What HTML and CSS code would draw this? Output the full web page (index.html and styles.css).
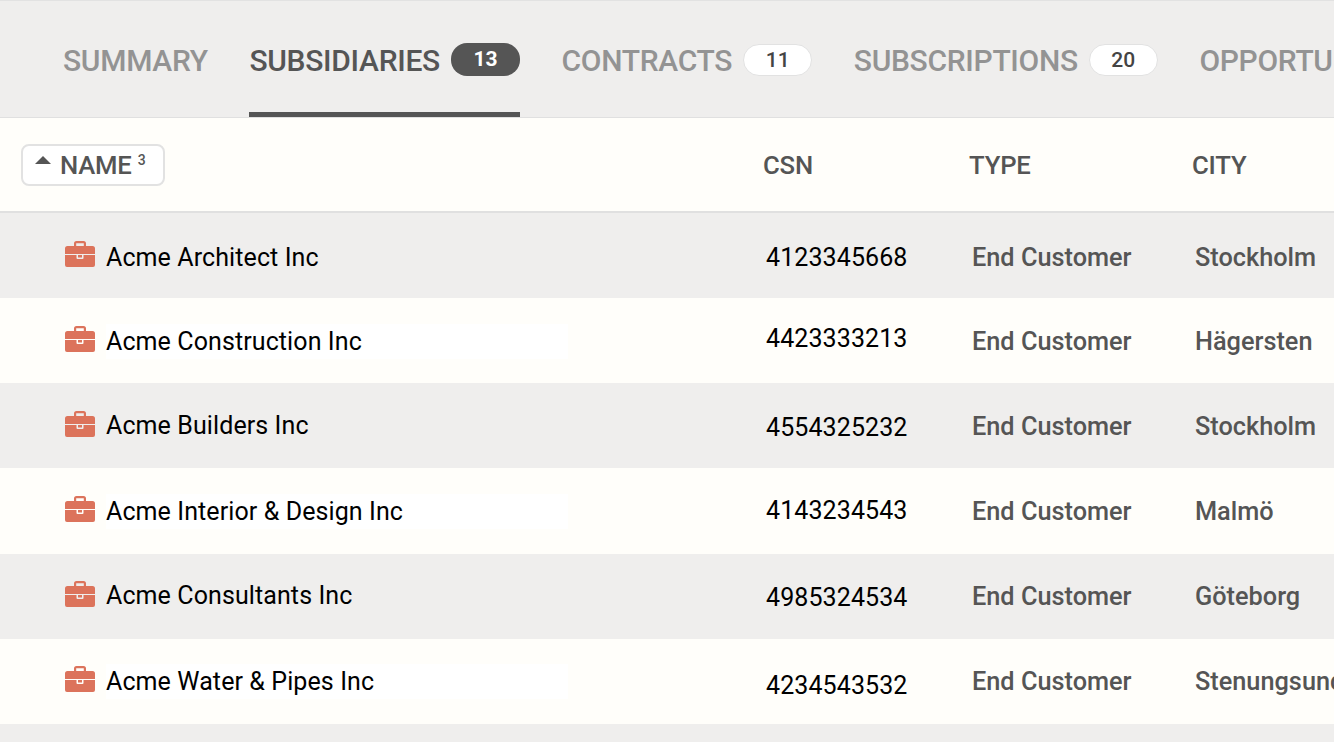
FILE: index.html
```html
<html>
  <head>
    <meta charset="utf-8">
    <title>Subsidiaries</title>
    <link rel="stylesheet" href="styles.css">
  </head>
  <body>
    <svg class="sprite" width="0" height="0">
      <symbol id="briefcase" viewBox="0 0 30 26">
        <path d="M9 5V2.500A2.500 2.500 0 0 1 11.500 0h7A2.500 2.500 0 0 1 21 2.500V5h-2.200V2.200h-7.600V5z"/>
        <path d="M2.500 5h25A2.500 2.500 0 0 1 30 7.500V13H0V7.500A2.500 2.500 0 0 1 2.500 5z"/>
        <path d="M0 14h11.500V17a1 1 0 0 0 1 1h5a1 1 0 0 0 1-1v-3H30V24a2 2 0 0 1-2 2H2a2 2 0 0 1-2-2z"/>
        <path d="M13 14h4v2.500h-4z"/>
      </symbol>
    </svg>

    <nav class="tabs">
      <a class="tab">SUMMARY</a>
      <a class="tab active">SUBSIDIARIES <span class="count">13</span></a>
      <a class="tab">CONTRACTS <span class="count">11</span></a>
      <a class="tab">SUBSCRIPTIONS <span class="count">20</span></a>
      <a class="tab">OPPORTUNITIES</a>
    </nav>

    <div class="head">
      <div class="name-col"><span class="sort"><i class="arrow"></i>NAME <sup>3</sup></span></div>
      <div class="csn-col">CSN</div>
      <div class="type-col">TYPE</div>
      <div class="city-col">CITY</div>
    </div>

    <div class="row grey r1">
      <div class="name-col"><svg class="icon"><use href="#briefcase"/></svg><span class="name">Acme Architect Inc</span></div>
      <div class="csn-col csn">4123345668</div>
      <div class="type-col">End Customer</div>
      <div class="city-col">Stockholm</div>
    </div>
    <div class="row r2">
      <div class="name-col"><svg class="icon"><use href="#briefcase"/></svg><span class="name">Acme Construction Inc</span></div>
      <div class="csn-col csn">4423333213</div>
      <div class="type-col">End Customer</div>
      <div class="city-col">Hägersten</div>
    </div>
    <div class="row grey r3">
      <div class="name-col"><svg class="icon"><use href="#briefcase"/></svg><span class="name">Acme Builders Inc</span></div>
      <div class="csn-col csn">4554325232</div>
      <div class="type-col">End Customer</div>
      <div class="city-col">Stockholm</div>
    </div>
    <div class="row r4">
      <div class="name-col"><svg class="icon"><use href="#briefcase"/></svg><span class="name">Acme Interior &amp; Design Inc</span></div>
      <div class="csn-col csn">4143234543</div>
      <div class="type-col">End Customer</div>
      <div class="city-col">Malmö</div>
    </div>
    <div class="row grey r5">
      <div class="name-col"><svg class="icon"><use href="#briefcase"/></svg><span class="name">Acme Consultants Inc</span></div>
      <div class="csn-col csn">4985324534</div>
      <div class="type-col">End Customer</div>
      <div class="city-col">Göteborg</div>
    </div>
    <div class="row r6">
      <div class="name-col"><svg class="icon"><use href="#briefcase"/></svg><span class="name">Acme Water &amp; Pipes Inc</span></div>
      <div class="csn-col csn">4234543532</div>
      <div class="type-col">End Customer</div>
      <div class="city-col">Stenungsund</div>
    </div>
    <div class="row grey last"></div>
  </body>
</html>
```

FILE: styles.css
```css
html, body {
  margin: 0;
  height: 742px;
  overflow: hidden;
}

body {
  font-family: Roboto, sans-serif;
  background-color: #efeeed;
  color: #555;
}

.sprite {
  display: block;
  height: 0;
}

/* tabs */
.tabs {
  display: flex;
  gap: 41.600px;
  box-sizing: border-box;
  height: 118px;
  padding-left: 63px;
  border-top: 1px solid #e2e2e2;
  border-bottom: 1px solid #e0e0e0;
  white-space: nowrap;
  overflow: hidden;
}

.tab {
  display: flex;
  align-items: center;
  gap: 11px;
  box-sizing: border-box;
  height: 116px;
  padding-top: 8px;
  border-bottom: 5px solid transparent;
  font-size: 30px;
  font-weight: 500;
  letter-spacing: -0.3px;
  color: #939393;
}

.tab.active {
  color: #555;
  border-bottom-color: #555;
}

.count {
  display: block;
  width: 67px;
  height: 30px;
  margin-top: -1px;
  line-height: 30px;
  border: 1px solid #e2e2e2;
  border-radius: 16px;
  background-color: #fff;
  color: #444;
  font-size: 21px;
  font-weight: 500;
  letter-spacing: 0;
  text-align: center;
}

.active .count {
  width: 69px;
  height: 33px;
  margin-top: -2px;
  line-height: 33px;
  border: none;
  background-color: #555;
  color: #fff;
  font-weight: 700;
}

/* table */
.head, .row {
  display: grid;
  grid-template-columns: 766px 207px 222px 139px;
  align-items: center;
  background-color: #fffefa;
  overflow: hidden;
  white-space: nowrap;
}

.head {
  box-sizing: border-box;
  height: 95px;
  border-bottom: 2px solid #e0e0e0;
  font-size: 25.700px;
  font-weight: 500;
  color: #555;
  letter-spacing: -0.2px;
}

.head .name-col {
  padding-left: 21px;
}

.head .csn-col, .head .city-col {
  margin-left: -3px;
}

.head .type-col {
  margin-left: -4px;
}

.sort {
  display: inline-flex;
  align-items: center;
  box-sizing: border-box;
  width: 144px;
  height: 42px;
  padding-left: 12px;
  border: 2px solid #e2e2e2;
  border-radius: 8px;
  background-color: #fff;
}

.sort sup {
  margin: -10px 0 0 6px;
  font-size: 14px;
  line-height: 1;
}

.arrow {
  width: 0;
  height: 0;
  margin: -10px 9px 0 0;
  border-left: 8px solid transparent;
  border-right: 8px solid transparent;
  border-bottom: 8px solid #555;
}

.row {
  box-sizing: border-box;
  height: 85.170px;
  font-size: 25.300px;
  font-weight: 500;
}

.row.grey {
  background-color: #efeeed;
}

.row.last {
  height: 18px;
}

.row .type-col {
  margin-left: -1px;
}

.row .name-col {
  display: flex;
  align-items: center;
  padding-left: 65px;
}

.icon {
  flex: none;
  width: 30px;
  height: 26px;
  margin: -6px 11px 0 0;
  fill: #dc735b;
}

.name {
  flex: 1;
  margin-right: 198px;
  height: 35px;
  line-height: 35px;
  font-size: 25px;
  font-weight: 450;
  color: #000;
  letter-spacing: 0.1px;
}

.row:not(.grey) .name {
  background-color: #fff;
}

.csn {
  font-size: 25px;
  font-weight: 450;
  color: #000;
  letter-spacing: 0.100px;
}

/* the rows are not quite even in height of text */
.r1 { padding-top: 4px; }
.r1 .icon { margin-top: -8px; }
.r1 .csn { padding-bottom: 1px; }

.r2 { padding-top: 2px; }
.r2 .csn { padding-bottom: 6px; }

.r3 { padding-top: 2px; }
.r3 .name { line-height: 33px; }
.r3 .csn { padding-top: 1px; }

.r4 .icon { margin-top: -4px; }
.r4 .csn { padding-bottom: 1px; }

.r5 .icon { margin-top: -4px; }
.r5 .name { line-height: 33px; }
.r5 .csn { padding-top: 3px; }

.r6 .icon { margin-top: -4px; }
.r6 .csn { padding-top: 9px; }
```
